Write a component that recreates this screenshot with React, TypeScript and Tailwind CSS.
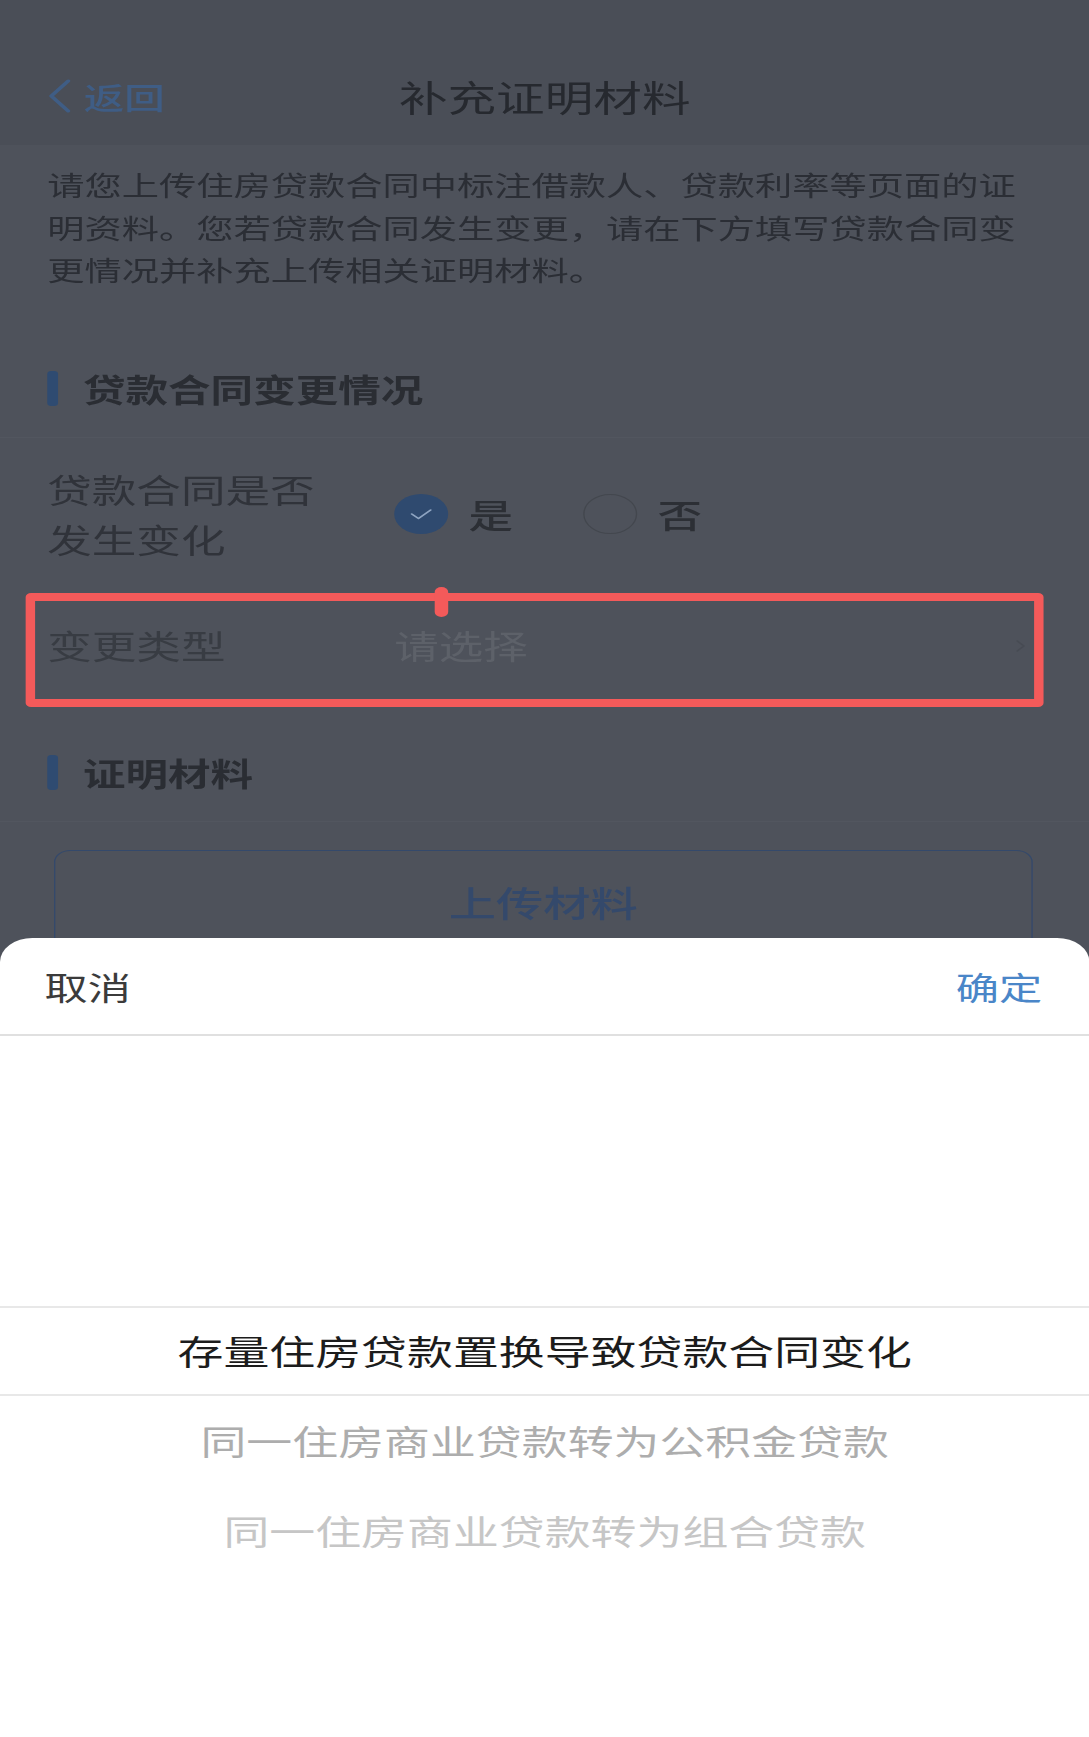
import { ChevronRight } from "lucide-react";

/**
 * 补充证明材料 form with the 变更类型 picker sheet open.
 * The reference capture is stretched horizontally (~1.35x), so the page is
 * laid out at 807px and stretched back to the 1089px frame.
 */

const font = "font-['Noto_Sans_CJK_SC','Noto_Sans',sans-serif]";

function SectionHeader({ title }: { title: string }) {
  return (
    <div className="flex h-[97px] items-center gap-[18.5px] border-b border-[#52565f] px-[35px]">
      <span className="h-[35px] w-[8px] rounded-[3px] bg-[#2f4b71]" />
      <span className="text-[31.5px] leading-none font-bold text-[#2a2d33]">{title}</span>
    </div>
  );
}

function Radio({ checked, label }: { checked: boolean; label: string }) {
  return (
    <div className="flex items-center gap-[15px]">
      {checked ? (
        <span className="flex h-[40px] w-[40px] items-center justify-center rounded-full bg-[#2f4a6f]">
          <svg width="18" height="14" viewBox="0 0 18 14" fill="none">
            <path d="M2 7l5 4.5L16 3" stroke="#8ea4c1" strokeWidth="1.6" strokeLinecap="round" strokeLinejoin="round" />
          </svg>
        </span>
      ) : (
        <span className="h-[40px] w-[40px] rounded-full border-[1.5px] border-[#43474e]" />
      )}
      <span className="text-[33px] leading-none font-medium text-[#2c2f35]">{label}</span>
    </div>
  );
}

const options = [
  { text: "存量住房贷款置换导致贷款合同变化", tone: "text-[#1c1c1c]" },
  { text: "同一住房商业贷款转为公积金贷款", tone: "text-[#adadad]" },
  { text: "同一住房商业贷款转为组合贷款", tone: "text-[#c6c6c6]" },
];

export default function App() {
  return (
    <div className={`h-[1737px] w-[1089px] overflow-hidden bg-[#4e525b] ${font}`}>
      <div className="flex h-[1737px] w-[807px] origin-top-left scale-x-[1.35] flex-col">
        <div className="h-[938px] shrink-0 overflow-hidden">
          {/* nav bar */}
          <div className="h-[145px] bg-[#4a4e57] pt-[47px]">
            <div className="grid h-[97px] grid-cols-[1fr_auto_1fr] items-center px-[35px]">
              <div className="flex items-center gap-[9px]">
                <svg width="18" height="34" viewBox="0 0 18 34" fill="none">
                  <path d="M15.5 2L3 17l12.5 15" stroke="#3f5d85" strokeWidth="3" strokeLinecap="round" strokeLinejoin="round" />
                </svg>
                <span className="text-[30px] leading-none font-medium text-[#3f5d85]">返回</span>
              </div>
              <div className="text-[36px] leading-none text-[#26292f]">补充证明材料</div>
              <div />
            </div>
          </div>

          {/* intro */}
          <p className="px-[35px] pt-[18px] pb-[50px] text-[27.6px] leading-[42.5px] text-[#2b2e35]">
            请您上传住房贷款合同中标注借款人、贷款利率等页面的证
            <br />
            明资料。您若贷款合同发生变更，请在下方填写贷款合同变
            <br />
            更情况并补充上传相关证明材料。
          </p>

          <SectionHeader title="贷款合同变更情况" />

          <div className="flex h-[153px] items-center px-[35px]">
            <div className="w-[257px] text-[33px] leading-[50px] text-[#30333a]">
              贷款合同是否
              <br />
              发生变化
            </div>
            <div className="flex items-center gap-[52px]">
              <Radio checked label="是" />
              <Radio checked={false} label="否" />
            </div>
          </div>

          <div className="relative flex h-[110px] items-center pr-[41px] pl-[35px]">
            <div className="w-[257px] text-[33px] leading-none text-[#383c43]">变更类型</div>
            <div className="flex-1 text-[33px] leading-none text-[#5d6169]">请选择</div>
            <ChevronRight size={20} strokeWidth={1.5} className="text-[#474b53]" />
            {/* annotation */}
            <div className="absolute top-[2px] left-[18.5px] h-[114px] w-[754px] rounded-[4px] border-x-[7.5px] border-y-[8px] border-[#f45a5a]" />
            <div className="absolute top-[-4px] left-[322px] h-[30px] w-[10px] rounded-full bg-[#f45a5a]" />
          </div>

          <div className="mt-[24px]">
            <SectionHeader title="证明材料" />
          </div>

          <div className="px-[40px] pt-[28px]">
            <div className="flex h-[104px] w-[725px] items-center justify-center rounded-[12px] border-[1.5px] border-[#34496b]">
              <span className="text-[35px] leading-none font-medium text-[#34496b]">上传材料</span>
            </div>
          </div>
        </div>

        {/* picker sheet */}
        <div className="flex-1 rounded-t-[24px] bg-white">
          <div className="flex h-[98px] items-center justify-between border-b-2 border-[#e0e0e0] pr-[35px] pl-[33px] text-[32px] leading-none">
            <span className="text-[#3b3b3b]">取消</span>
            <span className="text-[#4a86c8]">确定</span>
          </div>
          <div className="pt-[270px]">
            {options.map((o, i) => (
              <div
                key={o.text}
                className={`flex h-[90px] items-center justify-center text-[34px] leading-none ${o.tone} ${
                  i === 0 ? "border-y-2 border-[#e8e8e8]" : ""
                }`}
              >
                {o.text}
              </div>
            ))}
          </div>
        </div>
      </div>
    </div>
  );
}
